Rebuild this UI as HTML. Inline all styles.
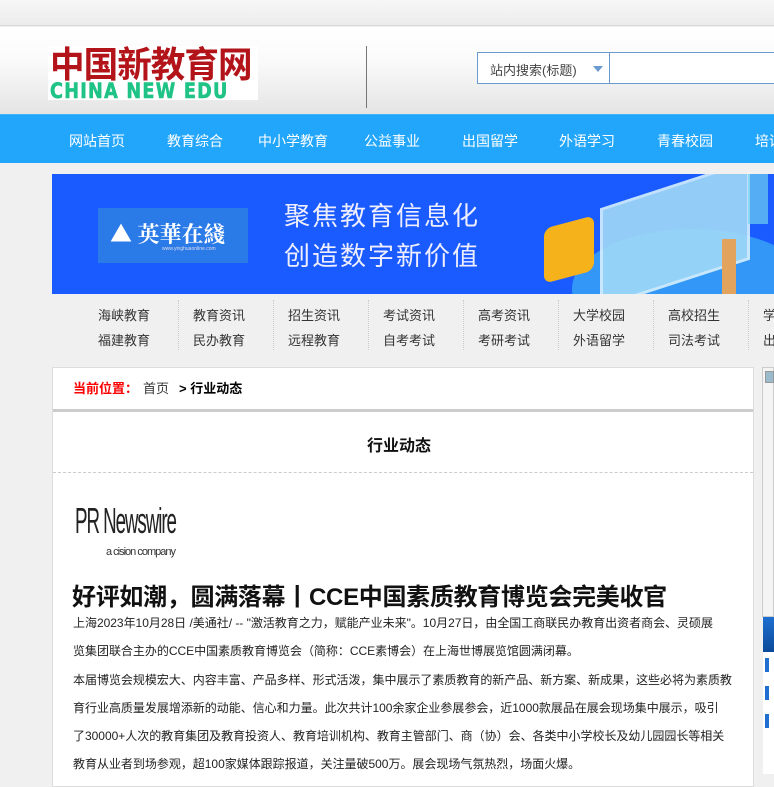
<!DOCTYPE html>
<html><head><meta charset="utf-8">
<style>
*{margin:0;padding:0;box-sizing:border-box}
body{width:774px;height:774px;overflow:hidden;background:#f0f0f0;font-family:"Liberation Sans","Noto Sans CJK SC",sans-serif;position:relative}
.abs{position:absolute}
.top{left:0;top:0;width:774px;height:26px;background:linear-gradient(#f7f7f7,#ececec);border-bottom:1px solid #d8d8d8}
.head{left:0;top:27px;width:774px;height:87px;background:linear-gradient(#fff,#fafafa 40%,#e4e4e4)}
.nav{left:0;top:114px;width:774px;height:49px;background:#22a6fb;border-top:1px solid #3fb4ff}
.nav span{position:absolute;top:16px;color:#fff;font-size:14px;transform:translateX(-50%);white-space:nowrap}
.sub span{position:absolute;font-size:13px;color:#333;white-space:nowrap}
.sep{position:absolute;top:300px;height:50px;border-left:1px dotted #ccc}
.box{left:52px;top:367px;width:702px;height:420px;background:#fff;border:1px solid #ddd}
p.t{position:absolute;left:73px;font-size:12px;color:#222;white-space:nowrap;letter-spacing:-0.02px}
</style></head><body>
<div class="abs top"></div>
<div class="abs head"></div>
<div class="abs" style="left:48px;top:46px;width:210px;height:54px;background:#fff"></div>
<div class="abs" style="left:50px;top:40px;font-size:36px;font-weight:bold;color:#b3141a;letter-spacing:-1px;font-family:'Noto Sans CJK SC',sans-serif;line-height:44px;transform:scaleX(.96);transform-origin:left;white-space:nowrap">中国新教育网</div>
<div class="abs" style="left:50px;top:81px;font-size:21px;font-weight:bold;color:#1ec385;letter-spacing:1.5px;line-height:20px;font-family:'DejaVu Sans','Liberation Sans',sans-serif;transform:scaleX(.84);transform-origin:left;white-space:nowrap;-webkit-text-stroke:0.6px #1ec385">CHINA NEW EDU</div>
<div class="abs" style="left:366px;top:46px;width:1px;height:62px;background:#777"></div>
<div class="abs" style="left:477px;top:52px;width:300px;height:32px;border:1px solid #6b9ad0;background:#fff"></div>
<div class="abs" style="left:609px;top:52px;width:1px;height:32px;background:#6b9ad0"></div>
<div class="abs" style="left:490px;top:60px;font-size:13px;color:#444">站内搜索(标题)</div>
<div class="abs" style="left:593px;top:66px;border-left:5px solid transparent;border-right:5px solid transparent;border-top:6px solid #6b9ad0"></div>
<div class="abs nav">
<span style="left:97px">网站首页</span><span style="left:195px">教育综合</span><span style="left:293px">中小学教育</span><span style="left:392px">公益事业</span><span style="left:490px">出国留学</span><span style="left:587px">外语学习</span><span style="left:685px">青春校园</span><span style="left:755px;transform:none">培训</span>
</div>
<div class="abs" style="left:52px;top:174px;width:722px;height:120px;background:#1a5bff;overflow:hidden">
 <div class="abs" style="left:46px;top:34px;width:150px;height:55px;background:#2a7ae8"></div>
 <div class="abs" style="left:58px;top:44px;font-size:22px;color:#fff;font-family:'Noto Serif CJK SC',serif;font-weight:bold">▲ 英華在綫</div>
 <div class="abs" style="left:110px;top:72px;font-size:5px;color:#dde">www.yinghuaonline.com</div>
 <div class="abs" style="left:232px;top:22px;font-size:26px;color:#eef;letter-spacing:2px;line-height:40px">聚焦教育信息化<br>创造数字新价值</div>
 <div class="abs" style="left:520px;top:55px;width:240px;height:120px;border-radius:50%;background:#3aa6f5;opacity:.8"></div>
 <div class="abs" style="left:548px;top:10px;width:150px;height:100px;background:#9fd9f7;border:3px solid #d6f0ff;transform:skewY(-18deg);opacity:.9"></div>
 <div class="abs" style="left:492px;top:48px;width:50px;height:55px;background:#f5b21a;border-radius:8px;transform:skewY(-15deg)"></div>
 <div class="abs" style="left:670px;top:65px;width:14px;height:55px;background:#e2a45c"></div>
 <div class="abs" style="left:696px;top:0;width:20px;height:50px;background:#6fd0f0;opacity:.7"></div>
</div>
<div class="sub">
<span style="left:98px;top:305px">海峡教育</span><span style="left:98px;top:330px">福建教育</span>
<span style="left:193px;top:305px">教育资讯</span><span style="left:193px;top:330px">民办教育</span>
<span style="left:288px;top:305px">招生资讯</span><span style="left:288px;top:330px">远程教育</span>
<span style="left:383px;top:305px">考试资讯</span><span style="left:383px;top:330px">自考考试</span>
<span style="left:478px;top:305px">高考资讯</span><span style="left:478px;top:330px">考研考试</span>
<span style="left:573px;top:305px">大学校园</span><span style="left:573px;top:330px">外语留学</span>
<span style="left:668px;top:305px">高校招生</span><span style="left:668px;top:330px">司法考试</span>
<span style="left:763px;top:305px">学</span><span style="left:763px;top:330px">出</span>
</div>
<div class="sep" style="left:178px"></div><div class="sep" style="left:273px"></div><div class="sep" style="left:368px"></div><div class="sep" style="left:463px"></div><div class="sep" style="left:558px"></div><div class="sep" style="left:653px"></div><div class="sep" style="left:748px"></div>
<div class="abs box"></div>
<div class="abs" style="left:53px;top:409px;width:700px;height:3px;background:#ccc"></div>
<div class="abs" style="left:53px;top:472px;width:700px;border-top:1px dashed #ccc"></div>
<div class="abs" style="left:73px;top:378px;font-size:13px;font-weight:bold;color:#f00">当前位置：</div>
<div class="abs" style="left:143px;top:378px;font-size:13px;color:#333">首页</div>
<div class="abs" style="left:179px;top:378px;font-size:13px;color:#000;font-weight:bold">&gt; 行业动态</div>
<div class="abs" style="left:367px;top:432px;font-size:16px;font-weight:bold;color:#111">行业动态</div>
<div class="abs" style="left:75px;top:500px;font-size:36px;color:#222;transform:scaleX(.52);transform-origin:left;letter-spacing:-2px;white-space:nowrap">PR Newswire</div>
<div class="abs" style="left:106px;top:546px;font-size:11px;color:#333;letter-spacing:-1px">a cision company</div>
<div class="abs" style="left:72px;top:577px;font-size:24px;font-weight:bold;color:#111;white-space:nowrap;letter-spacing:-0.3px">好评如潮，圆满落幕丨CCE中国素质教育博览会完美收官</div>
<p class="t" style="top:614px">上海2023年10月28日 /美通社/ -- "激活教育之力，赋能产业未来"。10月27日，由全国工商联民办教育出资者商会、灵硕展</p>
<p class="t" style="top:642px">览集团联合主办的CCE中国素质教育博览会（简称：CCE素博会）在上海世博展览馆圆满闭幕。</p>
<p class="t" style="top:671px">本届博览会规模宏大、内容丰富、产品多样、形式活泼，集中展示了素质教育的新产品、新方案、新成果，这些必将为素质教</p>
<p class="t" style="top:699px">育行业高质量发展增添新的动能、信心和力量。此次共计100余家企业参展参会，近1000款展品在展会现场集中展示，吸引</p>
<p class="t" style="top:727px">了30000+人次的教育集团及教育投资人、教育培训机构、教育主管部门、商（协）会、各类中小学校长及幼儿园园长等相关</p>
<p class="t" style="top:755px">教育从业者到场参观，超100家媒体跟踪报道，关注量破500万。展会现场气氛热烈，场面火爆。</p>
<div class="abs" style="left:762px;top:367px;width:12px;height:250px;border:1px solid #ccc;background:#f4f4f4"></div>
<div class="abs" style="left:765px;top:371px;width:9px;height:12px;background:#9bc;border:1px solid #999"></div>
<div class="abs" style="left:763px;top:617px;width:11px;height:35px;background:linear-gradient(#1e6fd0,#0b4a9a)"></div>
<div class="abs" style="left:763px;top:652px;width:11px;height:122px;background:#fff"></div>
<div class="abs" style="left:765px;top:658px;width:4px;height:14px;background:#1e6fd0"></div>
<div class="abs" style="left:765px;top:686px;width:4px;height:14px;background:#1e6fd0"></div>
<div class="abs" style="left:765px;top:714px;width:4px;height:14px;background:#1e6fd0"></div>
</body></html>
